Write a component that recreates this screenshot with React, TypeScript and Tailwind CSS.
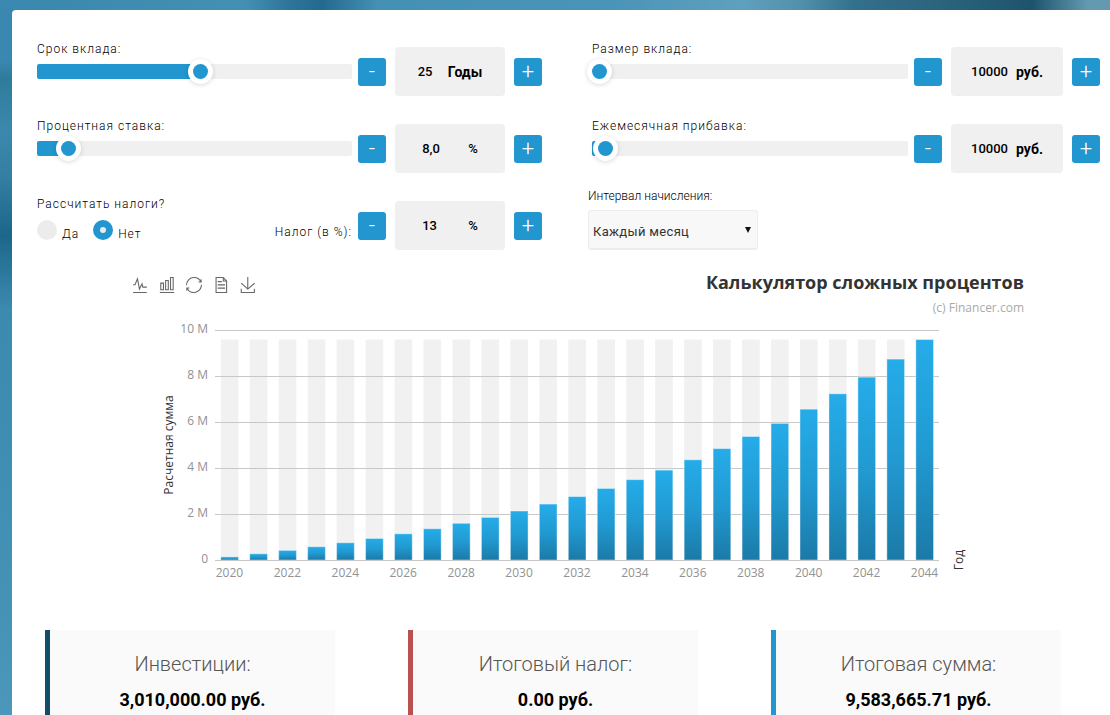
import { useState } from "react";

type FieldProps = {
    id: string;
    label: string;
    unit: string;
    min: number;
    max: number;
    step: number;
    value: number;
    format?: (value: number) => string;
    onChange: (value: number) => void;
    inputClass: string;
    boxClass: string;
};

const toolbar = [
    { name: "Линия", path: "M4.1,28.9h7.1l9.3-22l7.4,38l9.7-19.7l3,12.8h14.9M4.1,58h51.4" },
    { name: "Столбцы", path: "M6.7,22.9h10V48h-10V22.9zM24.9,13h10v35h-10V13zM43.2,2h10v46h-10V2zM3.1,58h53.7" },
    { name: "Обновить", path: "M47,18.9h9.8V8.7M56.3,20.1C52.1,9,40.5,0.6,26.8,2.1C12.6,3.7,1.6,16.2,2.1,30.6M13,41.1H3.1v10.2M3.7,39.9c4.2,11.1,15.8,19.5,29.5,18c14.2-1.6,25.2-14.1,24.7-28.5" },
    { name: "Данные", path: "M17.5,17.3H33M45.4,29.5h-28M11.5,2v56H51V14.8L38.4,2H11.5zM38.4,2.2v12.7H51M45.4,41.7h-28" },
    { name: "Сохранить", path: "M4.7,22.9L29.3,45.5L54.7,23.4M4.6,43.6L4.6,58L53.8,58L53.8,43.6M29.2,45.1L29.2,0" },
];

const StepButton = ({ sign, label, onClick }: { sign: string; label: string; onClick: () => void }) => (
    <button
        type="button"
        aria-label={label}
        onClick={onClick}
        className="w-7 h-7 mb-2.5 shrink-0 flex items-center justify-center rounded-[3px] bg-[#2196cf] text-white text-[22px] leading-7 font-light"
    >
        {sign}
    </button>
);

const Stepper = ({ id, label, unit, min, max, step, value, format, onChange, inputClass, boxClass }: FieldProps) => {
    const move = (delta: number) => onChange(Math.min(max, Math.max(min, value + delta)));

    return (
        <div className="flex items-end shrink-0">
            <StepButton sign="-" label={`${label} меньше`} onClick={() => move(-step)} />
            <div className={`h-[49px] mx-[9px] flex items-center justify-center rounded bg-[#f0f0f0] text-black ${boxClass}`}>
                <input
                    id={id}
                    type="text"
                    aria-label={label}
                    readOnly
                    value={format ? format(value) : String(value)}
                    className={`p-0 text-[13px] leading-5 font-medium bg-transparent outline-none ${inputClass}`}
                />
                <span className={unit === "%" ? "text-[13px] leading-5 font-medium" : "text-sm leading-5 font-bold"}>{unit}</span>
            </div>
            <StepButton sign="+" label={`${label} больше`} onClick={() => move(step)} />
        </div>
    );
};

const SliderField = (props: FieldProps) => {
    const { id, label, min, max, step, value, onChange } = props;
    const percent = ((value - min) / (max - min)) * 100;

    return (
        <div className="flex items-end gap-1.5">
            <div className="flex-1 min-w-0 flex flex-col gap-[7px] mb-[17px]">
                <label htmlFor={`${id}-range`} className="text-xs leading-4 font-light tracking-[1px] text-black">{label}</label>
                <input
                    id={`${id}-range`}
                    type="range"
                    min={min}
                    max={max}
                    step={step}
                    value={value}
                    onChange={(e) => onChange(Number(e.target.value))}
                    style={{ backgroundImage: `linear-gradient(to right, #2196cf ${percent}%, #f0f0f0 ${percent}%)` }}
                    className="block w-full h-[15px] m-0 appearance-none rounded-[2px] cursor-pointer [&::-webkit-slider-thumb]:appearance-none [&::-webkit-slider-thumb]:w-[15px] [&::-webkit-slider-thumb]:h-[15px] [&::-webkit-slider-thumb]:rounded-full [&::-webkit-slider-thumb]:bg-[#2196cf] [&::-webkit-slider-thumb]:shadow-[0_0_0_5px_#fff,0_1px_5px_5px_rgba(0,0,0,0.15)]"
                />
            </div>
            <Stepper {...props} />
        </div>
    );
};

// yearly balances with monthly compounding
const getBalances = (start: number, monthly: number, rate: number, years: number) => {
    const balances: number[] = [];
    let total = start;
    for (let month = 1; month <= years * 12; month++) {
        total = total * (1 + rate / 1200) + monthly;
        if (month % 12 === 0) balances.push(total);
    }
    return balances;
};

const Chart = ({ balances }: { balances: number[] }) => {
    const left = 83;
    const width = 724;
    const bottom = 244;
    const top = 14;
    const limit = Math.max(2, Math.ceil(Math.max(...balances) / 2000000) * 2);
    const scale = (bottom - top) / limit;
    const band = width / balances.length;
    const highest = (Math.max(...balances) / 1000000) * scale;
    const ticks = [0, 1, 2, 3, 4, 5].map((i) => (limit / 5) * i);

    return (
        <svg viewBox="0 0 892 274" className="block w-full font-['Open_Sans',sans-serif]" role="img" aria-label="Расчетная сумма по годам">
            <defs>
                <linearGradient id="bar" x1="0" y1="0" x2="0" y2="1">
                    <stop offset="0" stopColor="#25ace9" />
                    <stop offset="0.5" stopColor="#219ad2" />
                    <stop offset="1" stopColor="#1b7aa7" />
                </linearGradient>
            </defs>
            {balances.map((_, i) => (
                <rect key={i} x={left + band * (i + 0.2)} y={bottom - highest} width={band * 0.61} height={highest} fill="#f1f1f1" />
            ))}
            {ticks.map((tick) => (
                <g key={tick}>
                    <path d={`M${left} ${bottom - tick * scale + 0.5}h${width}`} stroke="#c8c8c8" />
                    <text x="76" y={bottom - tick * scale + 3} textAnchor="end" fontSize="12" fill="#929292">
                        {tick === 0 ? "0" : `${tick} M`}
                    </text>
                </g>
            ))}
            {balances.map((balance, i) => {
                const height = (balance / 1000000) * scale;
                return (
                    <rect
                        key={i}
                        x={left + band * (i + 0.2)}
                        y={bottom - height}
                        width={band * 0.61}
                        height={height}
                        fill="url(#bar)"
                        stroke="#fff"
                        strokeOpacity="0.4"
                    />
                );
            })}
            <path d={`M${left} ${bottom + 0.5}h${width}`} stroke="#c8c8c8" />
            {balances.map((_, i) => i % 2 === 0 && (
                <text key={i} x={left + band * (i + 0.5)} y="261" textAnchor="middle" fontSize="12" fill="#929292">
                    {2020 + i}
                </text>
            ))}
            <text transform="translate(41 129) rotate(-90)" textAnchor="middle" fontSize="12" fill="#333">Расчетная сумма</text>
            <text transform="translate(831 244) rotate(-90)" textAnchor="middle" fontSize="12" fill="#333">Год</text>
        </svg>
    );
};

const Result = ({ title, value, border }: { title: string; value: number; border: string }) => (
    <div className={`border-l-[5px] bg-[#fafafa] pt-[22px] text-center ${border}`}>
        <h2 className="text-xl leading-6 font-light text-[#555]">{title}</h2>
        <p className="mt-3 text-lg leading-6 font-bold text-black">
            {value.toLocaleString("en-US", { minimumFractionDigits: 2, maximumFractionDigits: 2 })} руб.
        </p>
    </div>
);

const App = () => {
    const [years, setYears] = useState(25);
    const [amount, setAmount] = useState(10000);
    const [rate, setRate] = useState(8);
    const [monthly, setMonthly] = useState(10000);
    const [withTax, setWithTax] = useState(false);
    const [tax, setTax] = useState(13);

    const balances = getBalances(amount, monthly, rate, years);
    const invested = amount + monthly * 12 * years;
    const total = balances[balances.length - 1];
    const taxSum = withTax ? ((total - invested) * tax) / 100 : 0;

    return (
        <div className="min-h-screen flex flex-col font-[Roboto,sans-serif] text-[#222] bg-[linear-gradient(to_bottom,#3a88b0_0,#3a88b0_60px,#2f7b9b_78px,#3b88ae_130px,#347fa3_175px,#1c668b_235px,#3d8ab0_310px,#3f8db3_450px,#4b96ba_715px)]">
            <div className="h-2.5 bg-[linear-gradient(to_right,#3a87af_0%,#4490b3_22%,#2e7599_26%,#236a8e_29%,#4590b5_34%,#4a94b8_55%,#5fa0bd_67%,#5390ab_72%,#33708b_77%,#2d657f_84%,#1d536d_93%,#6499b0_98%)]" />
            <div className="flex-1 flex flex-col ml-3">
                <main className="flex-1 flex flex-col rounded-tl bg-white">
                    <form className="grid grid-cols-[505fr_508fr] auto-rows-[61px] items-end gap-x-[50px] gap-y-4 pt-[25px] pl-[25px] pr-2.5">
                        <SliderField id="years" label="Срок вклада:" unit="Годы" min={0} max={48} step={1} value={years} onChange={(v) => setYears(Math.max(1, v))} inputClass="w-4 mr-3.5" boxClass="w-[110px]" />
                        <SliderField id="amount" label="Размер вклада:" unit="руб." min={10000} max={1000000} step={10000} value={amount} onChange={setAmount} inputClass="w-[38px] mr-[7px]" boxClass="w-28" />
                        <SliderField id="rate" label="Процентная ставка:" unit="%" min={0} max={100} step={1} value={rate} format={(v) => v.toFixed(1).replace(".", ",")} onChange={setRate} inputClass="w-5 mr-[26px]" boxClass="w-[110px]" />
                        <SliderField id="monthly" label="Ежемесячная прибавка:" unit="руб." min={0} max={500000} step={10000} value={monthly} onChange={setMonthly} inputClass="w-[38px] mr-[7px]" boxClass="w-28" />

                        <div className="flex items-end gap-1.5 text-black">
                            <fieldset className="flex-1 mb-2 font-light text-xs tracking-[1px]">
                                <legend className="leading-4 mb-2">Рассчитать налоги?</legend>
                                <div className="flex gap-3.5">
                                    <label className="flex items-start gap-[5px]">
                                        <input type="radio" name="tax" checked={withTax} onChange={() => setWithTax(true)} className="w-5 h-5 appearance-none rounded-full bg-[#ececec] border-[#2196cf] checked:border-[7px]" />
                                        <span className="pt-1.5 leading-4">Да</span>
                                    </label>
                                    <label className="flex items-start gap-[5px]">
                                        <input type="radio" name="tax" checked={!withTax} onChange={() => setWithTax(false)} className="w-5 h-5 appearance-none rounded-full bg-[#ececec] border-[#2196cf] checked:border-[7px]" />
                                        <span className="pt-1.5 leading-4">Нет</span>
                                    </label>
                                </div>
                            </fieldset>
                            <label htmlFor="tax" className="mb-2.5 leading-4 font-light text-xs tracking-[1px]">Налог (в %):</label>
                            <Stepper id="tax" label="Налог" unit="%" min={0} max={100} step={1} value={tax} onChange={setTax} inputClass="w-5 mr-[26px]" boxClass="w-[110px]" />
                        </div>

                        <div className="flex flex-col gap-1.5 -ml-1">
                            <label htmlFor="interval" className="text-xs leading-4 font-light text-black">Интервал начисления:</label>
                            <div className="relative w-[170px]">
                                <select id="interval" className="w-full h-10 appearance-none rounded-[3px] border border-b-2 border-[#ededed] bg-[#f8f8f8] px-1 pt-1 text-[13px] tracking-wide text-[#333]">
                                    <option>Каждый месяц</option>
                                    <option>Каждый год</option>
                                </select>
                                <svg viewBox="0 0 6 6" className="absolute right-[7px] top-[17px] w-1.5 h-1.5 pointer-events-none" fill="#111">
                                    <path d="M0 0h6L3 6z" />
                                </svg>
                            </div>
                        </div>
                    </form>

                    <section className="mt-5 pl-[120px] pr-[86px]">
                        <div className="flex items-start justify-between font-['Open_Sans',sans-serif]">
                            <div className="flex gap-[11px] pt-[7px]">
                                {toolbar.map((tool) => (
                                    <button key={tool.name} type="button" aria-label={tool.name} className="w-4 h-4">
                                        <svg viewBox="0 0 60 60" className="w-4 h-4" fill="none" stroke="#666" strokeWidth="4">
                                            <path d={tool.path} />
                                        </svg>
                                    </button>
                                ))}
                            </div>
                            <div className="text-right">
                                <h1 className="text-lg leading-6 font-bold text-[#333]">Калькулятор сложных процентов</h1>
                                <p className="mt-1.5 text-xs leading-4 text-[#aaa]">(c) Financer.com</p>
                            </div>
                        </div>
                        <Chart balances={balances} />
                    </section>

                    <section className="flex-1 grid grid-cols-3 gap-[73px] mt-10 pl-[33px] pr-[49px]">
                        <Result title="Инвестиции:" value={invested} border="border-[#124e68]" />
                        <Result title="Итоговый налог:" value={taxSum} border="border-[#b95151]" />
                        <Result title="Итоговая сумма:" value={total - taxSum} border="border-[#2196cf]" />
                    </section>
                </main>
            </div>
        </div>
    );
};

export default App;
